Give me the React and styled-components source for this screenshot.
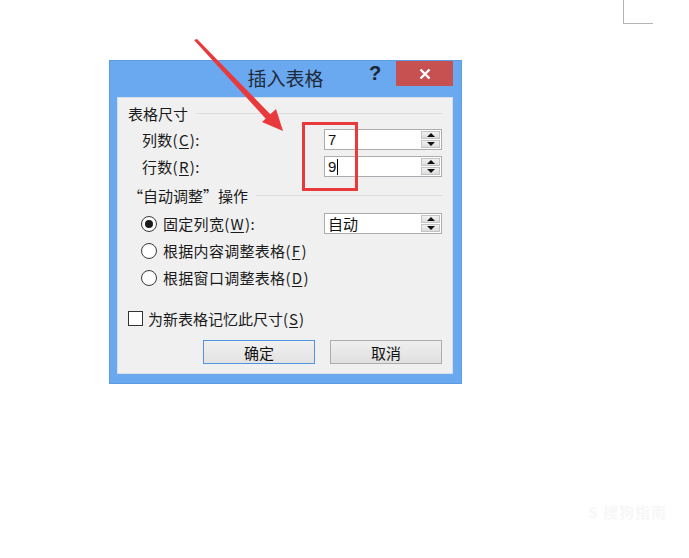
import React from 'react'
import styled, { createGlobalStyle } from 'styled-components'

const Global = createGlobalStyle`
  html, body {
    margin: 0;
    padding: 0;
    background: #ffffff;
  }
  body {
    font-family: "Noto Sans CJK SC", "Liberation Sans", sans-serif;
  }
`

const FONT = `"Noto Sans CJK SC", "Liberation Sans", sans-serif`

//Page
const Page = styled.div`
  position: relative;
  width: 689px;
  height: 558px;
  padding: 60px 0 0 109px;
  box-sizing: border-box;
  overflow: hidden;
  background: #fff;
`

const CornerMark = styled.div`
  position: absolute;
  left: 623px;
  top: 0;
  width: 29px;
  height: 23px;
  border-left: 1px solid #b4b4b4;
  border-bottom: 1px solid #b4b4b4;
`

const Watermark = styled.div`
  position: absolute;
  right: 22px;
  bottom: 36px;
  color: #f7f7f7;
  font: 600 15px ${FONT};
  letter-spacing: 1px;
`

//Dialog shell
const Dialog = styled.div`
  width: 353px;
  height: 324px;
  box-sizing: border-box;
  background: #6aa8f0;
  border: 1px solid #5f9be0;
  display: flex;
  flex-direction: column;
`

const TitleBar = styled.div`
  height: 36px;
  display: flex;
  align-items: flex-start;
  position: relative;
`

const Title = styled.div`
  position: absolute;
  left: 0;
  right: 0;
  top: 3px;
  text-align: center;
  font: 19px ${FONT};
  color: #1f2a38;
  pointer-events: none;
`

const TitleButtons = styled.div`
  margin-left: auto;
  margin-right: 8px;
  display: flex;
  align-items: flex-start;
`

const Help = styled.div`
  width: 24px;
  margin-right: 9px;
  margin-top: 1px;
  text-align: center;
  font: bold 20px "Liberation Sans", sans-serif;
  color: #1c2533;
`

const Close = styled.div`
  width: 57px;
  height: 25px;
  background: #c75050;
  display: flex;
  align-items: center;
  justify-content: center;
`

const Panel = styled.div`
  margin: 0 8px 9px 7px;
  flex: 1;
  background: #f0f0f0;
  border: 1px solid #d6dfe9;
  padding: 2px 10px 0 10px;
  display: flex;
  flex-direction: column;
  font: 15px ${FONT};
  color: #1a1a1a;
`

const GroupHead = styled.div`
  height: ${p => p.h}px;
  display: flex;
  align-items: center;
  gap: 8px;
  white-space: nowrap;
  &::after {
    content: '';
    flex: 1;
    height: 1px;
    background: #dcdcdc;
  }
`

const Row = styled.div`
  height: ${p => p.h || 27}px;
  margin-top: ${p => p.mt || 0}px;
  display: flex;
  align-items: center;
  padding-left: ${p => p.indent || 0}px;
`

const Label = styled.div`
  width: ${p => p.w}px;
  display: flex;
  align-items: center;
  white-space: nowrap;
  letter-spacing: 0.3px;
`

const Key = styled.span`
  text-decoration: underline;
  text-underline-offset: 2px;
  margin: 0 1px;
`

const Spin = styled.div`
  flex: 1;
  height: 21px;
  box-sizing: border-box;
  border: 1px solid #abadb3;
  background: #fff;
  display: flex;
  align-items: center;
  padding-left: 3px;
  padding-right: 1px;
`

const SpinValue = styled.div`
  flex: 1;
  display: flex;
  align-items: center;
  font: ${p => (p.cjk ? `15px ${FONT}` : `15px "Liberation Sans", sans-serif`)};
  color: #111;
`

const Caret = styled.span`
  display: inline-block;
  width: 1px;
  height: 16px;
  background: #000;
  margin-left: 1px;
`

const Arrows = styled.div`
  width: 19px;
  display: flex;
  flex-direction: column;
  gap: 1px;
`

const ArrowBtn = styled.div`
  height: 8px;
  box-sizing: border-box;
  border: 1px solid #c4c4c4;
  background: linear-gradient(#f2f2f2, #dcdcdc);
  display: flex;
  align-items: center;
  justify-content: center;
  &::before {
    content: '';
    border-left: 4px solid transparent;
    border-right: 4px solid transparent;
    ${p => (p.up ? 'border-bottom: 4px solid #111;' : 'border-top: 4px solid #111;')}
  }
`

const Radio = styled.div`
  width: 16px;
  height: 16px;
  box-sizing: border-box;
  border-radius: 50%;
  border: 1px solid #3c3c3c;
  background: radial-gradient(circle, #ffffff 55%, #e8e8e8 100%);
  margin-right: 6px;
  display: flex;
  align-items: center;
  justify-content: center;
  &::after {
    content: '';
    width: 8px;
    height: 8px;
    border-radius: 50%;
    background: ${p => (p.checked ? '#1a1a1a' : 'transparent')};
  }
`

const Check = styled.div`
  width: 15px;
  height: 15px;
  box-sizing: border-box;
  border: 1px solid #333;
  background: #fff;
  margin-right: 5px;
`

const Buttons = styled.div`
  margin-top: 8px;
  display: flex;
  justify-content: flex-end;
  gap: 15px;
`

const Button = styled.div`
  width: 112px;
  height: 24px;
  box-sizing: border-box;
  border: 1px solid ${p => (p.primary ? '#4f94de' : '#adadad')};
  background: ${p => (p.primary ? 'linear-gradient(#f0f0f0, #e3e3e3)' : 'linear-gradient(#efefef, #e0e0e0)')};
  display: flex;
  align-items: center;
  justify-content: center;
  font: 15px ${FONT};
  color: #111;
`

//Overlays
const Highlight = styled.div`
  position: absolute;
  left: 302px;
  top: 122px;
  width: 56px;
  height: 69px;
  box-sizing: border-box;
  border: 3px solid #e8393c;
`

const Pointer = styled.svg`
  position: absolute;
  left: 0;
  top: 0;
  pointer-events: none;
`

const SpinBox = ({ value, cjk, caret }) => (
  <Spin>
    <SpinValue cjk={cjk}>
      {value}
      {caret && <Caret />}
    </SpinValue>
    <Arrows>
      <ArrowBtn up />
      <ArrowBtn />
    </Arrows>
  </Spin>
)

const App = () => {
  return (
    <Page>
      <Global />
      <CornerMark />
      <Watermark>S 搜狗指南</Watermark>

      <Dialog>
        <TitleBar>
          <Title>插入表格</Title>
          <TitleButtons>
            <Help>?</Help>
            <Close>
              <svg width="12" height="12" viewBox="0 0 12 12">
                <path d="M1.5 1.5 L10.5 10.5 M10.5 1.5 L1.5 10.5" stroke="#fff" strokeWidth="2.4" />
              </svg>
            </Close>
          </TitleButtons>
        </TitleBar>

        <Panel>
          <GroupHead h={26}>表格尺寸</GroupHead>
          <Row indent={14}>
            <Label w={182}>列数(<Key>C</Key>):</Label>
            <SpinBox value="7" />
          </Row>
          <Row indent={14}>
            <Label w={182}>行数(<Key>R</Key>):</Label>
            <SpinBox value="9" caret />
          </Row>

          <GroupHead h={30}>“自动调整”操作</GroupHead>
          <Row indent={13}>
            <Label w={183}>
              <Radio checked />
              固定列宽(<Key>W</Key>):
            </Label>
            <SpinBox value="自动" cjk />
          </Row>
          <Row indent={13}>
            <Label w={300}>
              <Radio />
              根据内容调整表格(<Key>F</Key>)
            </Label>
          </Row>
          <Row indent={13}>
            <Label w={300}>
              <Radio />
              根据窗口调整表格(<Key>D</Key>)
            </Label>
          </Row>

          <Row h={28} mt={13}>
            <Check />
            为新表格记忆此尺寸(<Key>S</Key>)
          </Row>

          <Buttons>
            <Button primary>确定</Button>
            <Button>取消</Button>
          </Buttons>
        </Panel>
      </Dialog>

      <Highlight />
      <Pointer width="689" height="558" viewBox="0 0 689 558">
        <polygon points="194,40 197,39 271,115 266,119" fill="#e8393c" />
        <polygon points="283,131 262,122 276,109" fill="#e8393c" />
      </Pointer>
    </Page>
  )
}

export default App
